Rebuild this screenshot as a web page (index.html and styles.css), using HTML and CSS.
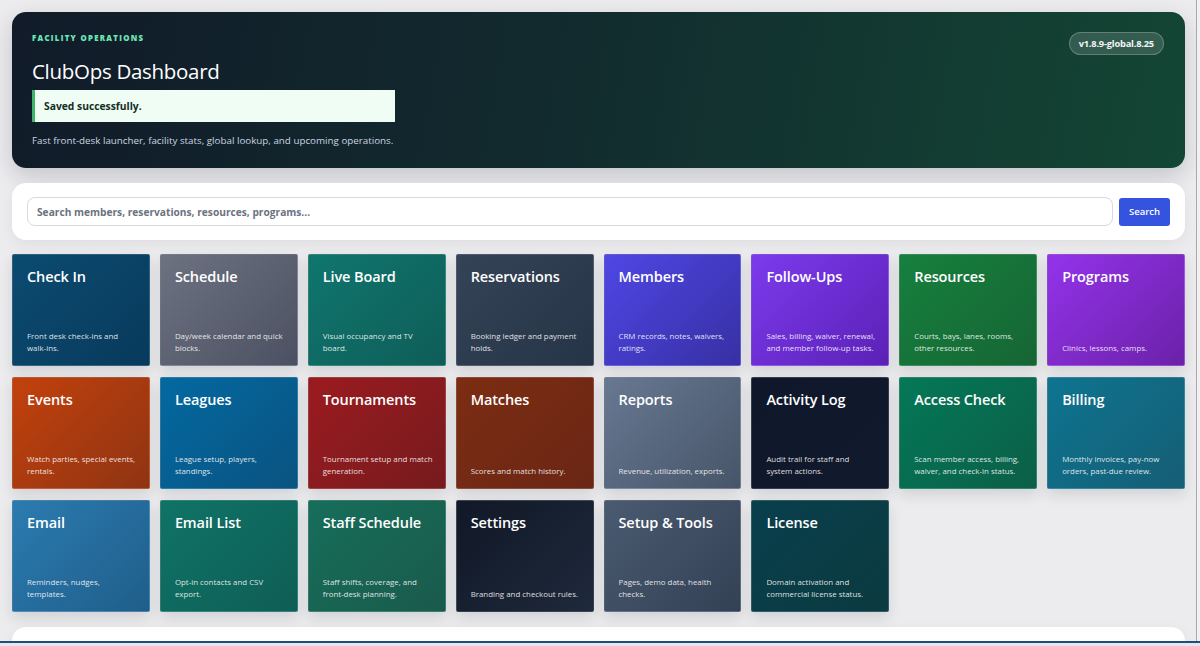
FILE: index.html
```html
<!DOCTYPE html>
<html lang="en">
<head>
<meta charset="utf-8">
<title>ClubOps Dashboard</title>
<link rel="stylesheet" href="styles.css">
</head>
<body>
<div class="page">
  <header class="hero">
    <div class="hero-main">
      <div class="eyebrow">FACILITY OPERATIONS</div>
      <h1 class="title">ClubOps Dashboard</h1>
      <div class="notice">Saved successfully.</div>
      <p class="subtitle">Fast front-desk launcher, facility stats, global lookup, and upcoming operations.</p>
    </div>
    <div class="version">v1.8.9-global.8.25</div>
  </header>

  <section class="search-card">
    <input class="search-input" type="text" placeholder="Search members, reservations, resources, programs...">
    <button class="search-btn">Search</button>
  </section>

  <nav class="tiles">
    <a class="tile t-checkin"><span class="tile-title">Check In</span><span class="tile-desc">Front desk check-ins and walk-ins.</span></a>
    <a class="tile t-schedule"><span class="tile-title">Schedule</span><span class="tile-desc">Day/week calendar and quick blocks.</span></a>
    <a class="tile t-live"><span class="tile-title">Live Board</span><span class="tile-desc">Visual occupancy and TV board.</span></a>
    <a class="tile t-res"><span class="tile-title">Reservations</span><span class="tile-desc">Booking ledger and payment holds.</span></a>
    <a class="tile t-members"><span class="tile-title">Members</span><span class="tile-desc">CRM records, notes, waivers, ratings.</span></a>
    <a class="tile t-follow"><span class="tile-title">Follow-Ups</span><span class="tile-desc">Sales, billing, waiver, renewal, and member follow-up tasks.</span></a>
    <a class="tile t-resources"><span class="tile-title">Resources</span><span class="tile-desc">Courts, bays, lanes, rooms, other resources.</span></a>
    <a class="tile t-programs"><span class="tile-title">Programs</span><span class="tile-desc">Clinics, lessons, camps.</span></a>

    <a class="tile t-events"><span class="tile-title">Events</span><span class="tile-desc">Watch parties, special events, rentals.</span></a>
    <a class="tile t-leagues"><span class="tile-title">Leagues</span><span class="tile-desc">League setup, players, standings.</span></a>
    <a class="tile t-tourn"><span class="tile-title">Tournaments</span><span class="tile-desc">Tournament setup and match generation.</span></a>
    <a class="tile t-matches"><span class="tile-title">Matches</span><span class="tile-desc">Scores and match history.</span></a>
    <a class="tile t-reports"><span class="tile-title">Reports</span><span class="tile-desc">Revenue, utilization, exports.</span></a>
    <a class="tile t-activity"><span class="tile-title">Activity Log</span><span class="tile-desc">Audit trail for staff and system actions.</span></a>
    <a class="tile t-access"><span class="tile-title">Access Check</span><span class="tile-desc">Scan member access, billing, waiver, and check-in status.</span></a>
    <a class="tile t-billing"><span class="tile-title">Billing</span><span class="tile-desc">Monthly invoices, pay-now orders, past-due review.</span></a>

    <a class="tile t-email"><span class="tile-title">Email</span><span class="tile-desc">Reminders, nudges, templates.</span></a>
    <a class="tile t-emaillist"><span class="tile-title">Email List</span><span class="tile-desc">Opt-in contacts and CSV export.</span></a>
    <a class="tile t-staff"><span class="tile-title">Staff Schedule</span><span class="tile-desc">Staff shifts, coverage, and front-desk planning.</span></a>
    <a class="tile t-settings"><span class="tile-title">Settings</span><span class="tile-desc">Branding and checkout rules.</span></a>
    <a class="tile t-setup"><span class="tile-title">Setup &amp; Tools</span><span class="tile-desc">Pages, demo data, health checks.</span></a>
    <a class="tile t-license"><span class="tile-title">License</span><span class="tile-desc">Domain activation and commercial license status.</span></a>
  </nav>

  <section class="stats-card"></section>
</div>
<div class="frame-right"></div>
<div class="frame-bottom"></div>
</body>
</html>
```

FILE: styles.css
```css
* { box-sizing: border-box; }

html, body {
  margin: 0;
  padding: 0;
  height: 100%;
  overflow: hidden;
}

body {
  background: #ececee;
  font-family: "Open Sans", "Noto Sans", "Liberation Sans", sans-serif;
  color: #111827;
}

.page {
  padding: 12px 15px 0 12px;
}

.hero {
  display: flex;
  justify-content: space-between;
  align-items: flex-start;
  padding: 20px 21px 19px 20px;
  height: 156px;
  border-radius: 14px;
  background: linear-gradient(100deg, #111b29 0%, #122a2e 45%, #134634 100%);
  box-shadow: 0 8px 22px rgba(15, 23, 42, 0.18);
  color: #fff;
}

.eyebrow {
  font-size: 7.8px;
  line-height: 12px;
  font-weight: 800;
  letter-spacing: 1.3px;
  color: #6ee7b7;
}

.title {
  margin: 13px 0 0;
  font-size: 20.5px;
  line-height: 28px;
  font-weight: 400;
  color: #fff;
  letter-spacing: -0.3px;
}

.notice {
  margin-top: 5px;
  width: 363px;
  height: 32px;
  display: flex;
  align-items: center;
  padding-left: 9px;
  background: #effdf4;
  border-left: 3px solid #3fb56a;
  color: #14301f;
  font-size: 10.3px;
  font-weight: 700;
}

.subtitle {
  margin: 11px 0 0;
  font-size: 9.8px;
  line-height: 16px;
  color: #cbd5e1;
}

.version {
  height: 23px;
  padding: 0 9px;
  display: flex;
  align-items: center;
  border-radius: 12px;
  background: rgba(255, 255, 255, 0.14);
  border: 1px solid rgba(255, 255, 255, 0.22);
  font-size: 9.3px;
  font-weight: 700;
  color: #f1f5f9;
  letter-spacing: -0.2px;
}

.search-card {
  margin-top: 15px;
  height: 57px;
  display: flex;
  align-items: center;
  gap: 6px;
  padding: 0 15px;
  background: #fff;
  border-radius: 14px;
  box-shadow: 0 4px 14px rgba(15, 23, 42, 0.06);
}

.search-input {
  flex: 1;
  height: 29px;
  border: 1px solid #d5d9e0;
  border-radius: 8px;
  padding: 0 9px;
  font-family: inherit;
  font-size: 10.2px;
  font-weight: 700;
  outline: none;
}

.search-input::placeholder {
  color: #6b7280;
  opacity: 1;
}

.search-btn {
  width: 51px;
  height: 28px;
  border: none;
  border-radius: 3px;
  background: #3454e0;
  color: #fff;
  font-family: inherit;
  font-size: 9.5px;
  font-weight: 600;
  padding: 0;
}

.tiles {
  margin-top: 14px;
  display: grid;
  grid-template-columns: repeat(8, 1fr);
  gap: 11px 10px;
}

.tile {
  height: 112px;
  display: flex;
  flex-direction: column;
  justify-content: space-between;
  padding: 12px 12px 11px 14px;
  border-radius: 2px;
  border: 1px solid rgba(255, 255, 255, 0.16);
  color: #fff;
  box-shadow: 0 6px 14px rgba(15, 23, 42, 0.12);
  text-decoration: none;
}

.tile-title {
  font-size: 14.5px;
  line-height: 20px;
  font-weight: 600;
  letter-spacing: -0.1px;
}

.tile-desc {
  font-size: 7.9px;
  line-height: 12px;
  color: rgba(255, 255, 255, 0.86);
}

.t-checkin   { background: linear-gradient(135deg, #0b4b70, #083a5c); }
.t-schedule  { background: linear-gradient(135deg, #6c7280, #4b5162); }
.t-live      { background: linear-gradient(135deg, #0f766e, #0f5d58); }
.t-res       { background: linear-gradient(135deg, #354357, #263447); }
.t-members   { background: linear-gradient(135deg, #4f46e5, #3730a3); }
.t-follow    { background: linear-gradient(135deg, #7c3aed, #5b21b6); }
.t-resources { background: linear-gradient(135deg, #16803d, #166534); }
.t-programs  { background: linear-gradient(135deg, #9333ea, #6b21a8); }

.t-events    { background: linear-gradient(135deg, #c2410c, #8f3413); }
.t-leagues   { background: linear-gradient(135deg, #0369a1, #0a5380); }
.t-tourn     { background: linear-gradient(135deg, #9b1b1f, #761b1e); }
.t-matches   { background: linear-gradient(135deg, #7c2d12, #6a2615); }
.t-reports   { background: linear-gradient(135deg, #677891, #475569); }
.t-activity  { background: linear-gradient(135deg, #0f172a, #111a2c); }
.t-access    { background: linear-gradient(135deg, #047857, #0b5f47); }
.t-billing   { background: linear-gradient(135deg, #0e7490, #155e75); }

.t-email     { background: linear-gradient(135deg, #2b7bb0, #1f5e8a); }
.t-emaillist { background: linear-gradient(135deg, #0f7366, #0f5e55); }
.t-staff     { background: linear-gradient(135deg, #166e5a, #1a5a4c); }
.t-settings  { background: linear-gradient(135deg, #111827, #1e293b); }
.t-setup     { background: linear-gradient(135deg, #4a5a70, #334155); }
.t-license   { background: linear-gradient(135deg, #083f4c, #0b3a40); }

.stats-card {
  margin-top: 15px;
  height: 80px;
  background: #fff;
  border-radius: 14px;
  box-shadow: 0 4px 14px rgba(15, 23, 42, 0.06);
}

.frame-right {
  position: fixed;
  top: 0;
  right: 0;
  bottom: 0;
  width: 4px;
  background: #f1f1f1;
  border-left: 1px solid #a9a9ad;
}

.frame-bottom {
  position: fixed;
  left: 0;
  right: 0;
  bottom: 0;
  height: 5px;
  background: #e4e8ee;
  border-top: 2px solid #1d4f7c;
}
```
